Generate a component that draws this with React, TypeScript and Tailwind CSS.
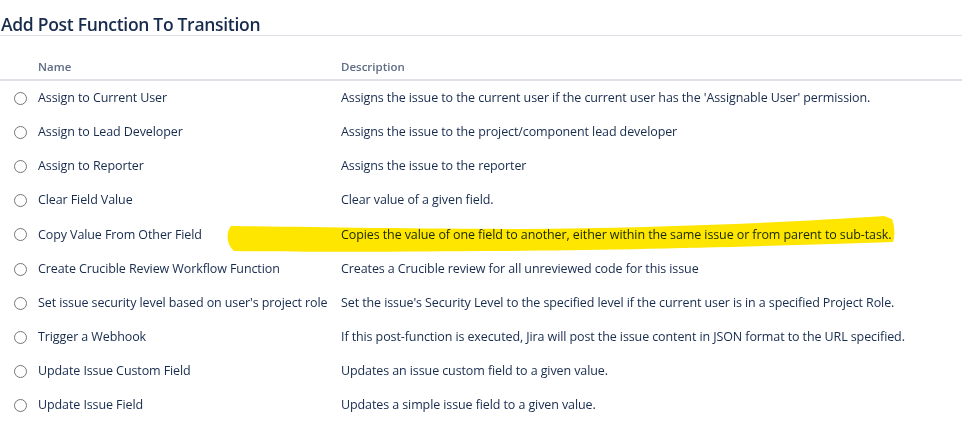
import React from 'react';

const rows: { name: string; desc: string }[] = [
  { name: 'Assign to Current User', desc: "Assigns the issue to the current user if the current user has the 'Assignable User' permission." },
  { name: 'Assign to Lead Developer', desc: 'Assigns the issue to the project/component lead developer' },
  { name: 'Assign to Reporter', desc: 'Assigns the issue to the reporter' },
  { name: 'Clear Field Value', desc: 'Clear value of a given field.' },
  { name: 'Copy Value From Other Field', desc: 'Copies the value of one field to another, either within the same issue or from parent to sub-task.' },
  { name: 'Create Crucible Review Workflow Function', desc: 'Creates a Crucible review for all unreviewed code for this issue' },
  { name: "Set issue security level based on user's project role", desc: "Set the issue's Security Level to the specified level if the current user is in a specified Project Role." },
  { name: 'Trigger a Webhook', desc: 'If this post-function is executed, Jira will post the issue content in JSON format to the URL specified.' },
  { name: 'Update Issue Custom Field', desc: 'Updates an issue custom field to a given value.' },
  { name: 'Update Issue Field', desc: 'Updates a simple issue field to a given value.' },
];

export default function App() {
  return (
    <div className="relative w-[962px] h-[432px] bg-white overflow-hidden text-[#172b4d] [font-family:'Open_Sans',sans-serif]">
      <h2 className="h-[36px] pt-[13px] pl-[1px] border-b border-[#dfe1e6] text-[17.5px] leading-[22px] font-semibold tracking-[-0.3px]">
        Add Post Function To Transition
      </h2>

      <div className="grid grid-cols-[341px_1fr] mt-[22px] h-[23px] border-b-2 border-[#dfe1e6] text-[11.5px] font-semibold text-[#5e6c84]">
        <div className="pl-[38px]">Name</div>
        <div>Description</div>
      </div>

      {rows.map((r) => (
        <div key={r.name} className="grid grid-cols-[341px_1fr] h-[34.1px] pt-[1px] items-center text-[12.5px] tracking-[-0.1px]">
          <div className="flex items-center">
            <span className="ml-[14px] mr-[11px] w-[13px] h-[13px] rounded-full border border-[#767676] bg-white" />
            <span className="whitespace-nowrap">{r.name}</span>
          </div>
          <div className="whitespace-nowrap">{r.desc}</div>
        </div>
      ))}

      {/* marker highlight drawn over the "Copy Value" row */}
      <svg className="absolute top-0 left-0 pointer-events-none mix-blend-multiply" width="962" height="432">
        <path
          d="M231,226 C300,227 420,229 520,229 C650,228 780,223 884,216 L892,219 C895,227 895,236 893,242 C780,246 600,251 480,251 C380,252 290,252 234,251 C226,244 226,232 231,226 Z"
          fill="#ffe600"
        />
      </svg>
    </div>
  );
}
